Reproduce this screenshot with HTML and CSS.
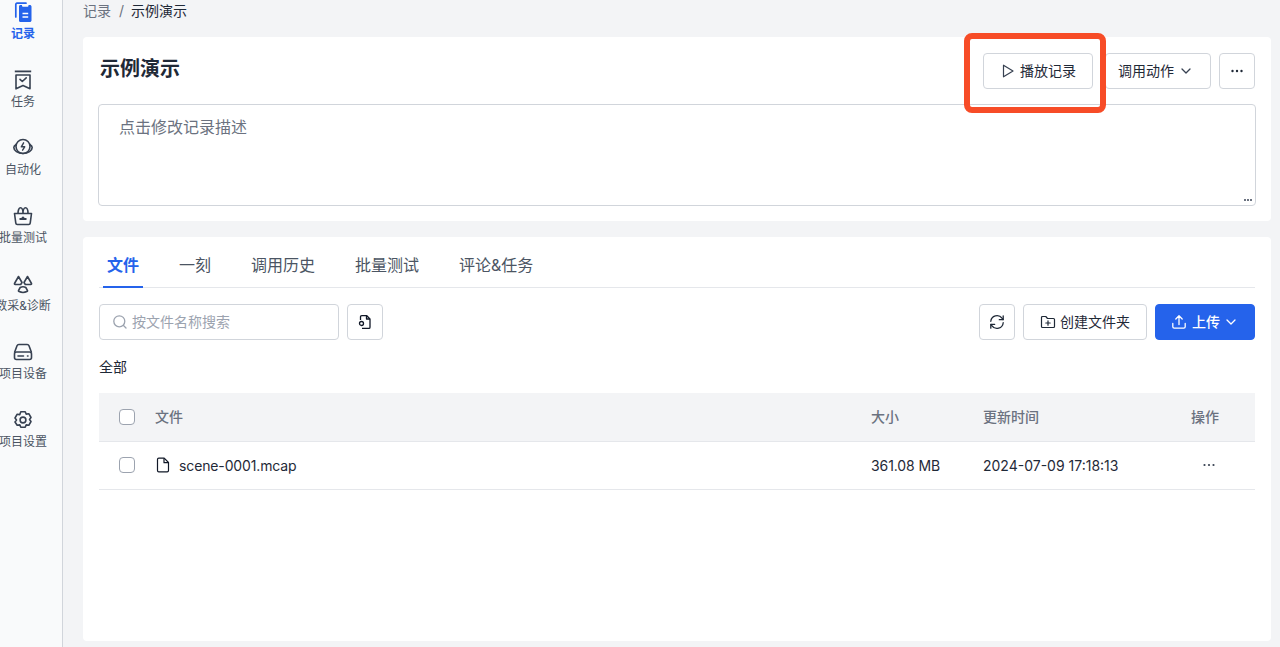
FILE: index.html
```html
<!DOCTYPE html>
<html>
<head>
    <title>示例演示</title>
    <link rel="stylesheet" href="styles.css">
</head>
<body>
    <div class="app">
        <!-- Left navigation -->
        <nav class="sidebar">
            <a class="nav-item active">
                <svg class="nav-icon" viewBox="0 0 20 20">
                    <path d="M2.800 15V2.400c0-.7.500-1.200 1.200-1.200h9" fill="none" stroke="#2563eb" stroke-width="1.700" stroke-linecap="round"/>
                    <path d="M6 4.500C6 3.700 6.600 3 7.400 3H9v.5c0 .8.600 1.300 1.300 1.300h4c.7 0 1.200-.5 1.200-1.300V3h1.300c.9 0 1.700.7 1.700 1.500v14c0 .9-.8 1.500-1.700 1.500H7.400C6.600 20 6 19.400 6 18.500z" fill="#2563eb"/>
                    <path d="M9.500 11.500h5.700M9.500 15h5.700" stroke="#fff" stroke-width="1.500"/>
                </svg>
                <span>记录</span>
            </a>
            <a class="nav-item">
                <svg class="nav-icon" viewBox="0 0 20 20" fill="none" stroke="#374151" stroke-width="1.600">
                    <path d="M1.800 1.400h16.400" stroke-width="1.800"/>
                    <path d="M3 5h14v13.800l-7-3.300-7 3.300z" stroke-linejoin="round"/>
                    <path d="M7 9.300l2.300 2.200 3.900-3.600" stroke-linecap="round" stroke-linejoin="round"/>
                </svg>
                <span>任务</span>
            </a>
            <a class="nav-item">
                <svg class="nav-icon" viewBox="0 0 20 20" fill="none" stroke="#374151" stroke-width="1.600">
                    <circle cx="10" cy="8.500" r="7"/>
                    <path d="M3.200 6.500C1.600 7.400.8 8.500.8 9.500c0 3 4 6 9.200 6s9.200-3 9.200-6c0-1-.8-2.100-2.400-3" stroke-linecap="round"/>
                    <path d="M10.600 4.800L8.300 8.800h3.400L9.600 12.200" stroke-linecap="round" stroke-linejoin="round" stroke-width="1.400"/>
                </svg>
                <span>自动化</span>
            </a>
            <a class="nav-item">
                <svg class="nav-icon" viewBox="0 0 20 20" fill="none" stroke="#374151" stroke-width="1.600">
                    <path d="M1.500 7.500h17l-1.300 9.700c-.1.800-.7 1.300-1.500 1.300H4.300c-.8 0-1.400-.5-1.500-1.300z" stroke-linejoin="round"/>
                    <path d="M5 7.500C5 4 6 1.800 7.500 1.800S10 4 10 7.500c0-3.500 1-5.700 2.500-5.700S15 4 15 7.500"/>
                    <path d="M10 10.300l1.800 1.800h1.700v1.900h-7v-1.900h1.700z" fill="#374151" stroke="none"/>
                </svg>
                <span>批量测试</span>
            </a>
            <a class="nav-item">
                <svg class="nav-icon" viewBox="0 0 20 20" fill="none" stroke="#374151" stroke-width="1.600" stroke-linejoin="round">
                    <path d="M5.500 2.500L1.500 9.500c-.2.500.1 1 .6 1h5.600L9 8.500z"/>
                    <path d="M14.500 2.500l4 7c.2.500-.1 1-.6 1h-5.600L11 8.500z"/>
                    <path d="M7.200 13.500c1.800-1 3.800-1 5.600 0l1.600 2.900c.2.500 0 1-.5 1.200-2.500 1.100-5.300 1.100-7.800 0-.5-.2-.7-.7-.5-1.200z"/>
                </svg>
                <span>数采&amp;诊断</span>
            </a>
            <a class="nav-item">
                <svg class="nav-icon" viewBox="0 0 20 20" fill="none" stroke="#374151" stroke-width="1.600">
                    <path d="M1.500 10.500L4 3.800c.3-.8 1-1.300 1.800-1.300h8.400c.8 0 1.500.5 1.800 1.300l2.500 6.700"/>
                    <rect x="1.500" y="10" width="17" height="7.500" rx="2"/>
                    <path d="M5 14h5.500M14.500 14h.5" stroke-linecap="round"/>
                </svg>
                <span>项目设备</span>
            </a>
            <a class="nav-item">
                <svg class="nav-icon" viewBox="0 0 20 20" fill="none" stroke="#374151" stroke-width="1.600" stroke-linejoin="round">
                    <path d="M7.800 1.700h4.400l1 2.400 2.600-.4 2.200 3.800-1.500 2 1.500 2-2.200 3.800-2.600-.4-1 2.400H7.800l-1-2.400-2.600.4L2 12l1.500-2-1.500-2 2.200-3.800 2.600.4z"/>
                    <circle cx="10" cy="10" r="2.900"/>
                </svg>
                <span>项目设置</span>
            </a>
        </nav>

        <main class="content">
            <div class="breadcrumb">
                <span class="crumb-link">记录</span>
                <span class="crumb-sep">/</span>
                <span>示例演示</span>
            </div>

            <!-- Record header -->
            <section class="card record-card">
                <div class="record-head">
                    <h1 class="record-title">示例演示</h1>
                    <div class="record-actions">
                        <button class="btn play-btn">
                            <svg class="icon" viewBox="0 0 16 16" fill="none" stroke="#374151" stroke-width="1.200" stroke-linejoin="round"><path d="M3.500 2.200v11.600L13 8z"/></svg>
                            <span class="btn-text">播放记录</span>
                        </button>
                        <button class="btn action-btn">
                            <span class="btn-text">调用动作</span>
                            <svg class="chevron" viewBox="0 0 12 12" fill="none" stroke="#374151" stroke-width="1.300" stroke-linecap="round" stroke-linejoin="round"><path d="M2 4l4 4 4-4"/></svg>
                        </button>
                        <button class="btn icon-btn">
                            <svg class="icon" viewBox="0 0 16 16" fill="#1f2937"><circle cx="3.500" cy="8" r="1.200"/><circle cx="8" cy="8" r="1.200"/><circle cx="12.500" cy="8" r="1.200"/></svg>
                        </button>
                    </div>
                </div>
                <div class="record-desc">
                    点击修改记录描述
                    <span class="desc-more"><i></i><i></i><i></i></span>
                </div>
                <!-- Highlight frame drawn on the screenshot -->
                <div class="highlight"></div>
            </section>

            <!-- Files -->
            <section class="card files-card">
                <div class="tabs">
                    <a class="tab active">文件</a>
                    <a class="tab">一刻</a>
                    <a class="tab">调用历史</a>
                    <a class="tab">批量测试</a>
                    <a class="tab">评论&amp;任务</a>
                </div>

                <div class="toolbar">
                    <div class="search-box">
                        <svg class="icon" viewBox="0 0 16 16" fill="none" stroke="#9ca3af" stroke-width="1.300" stroke-linecap="round"><circle cx="7.300" cy="7.300" r="5.500"/><path d="M11.500 11.500L14 14"/></svg>
                        <span class="btn-text">按文件名称搜索</span>
                    </div>
                    <button class="btn icon-btn">
                        <svg class="icon" viewBox="0 0 16 16" fill="none" stroke="#111827" stroke-width="1.300" stroke-linejoin="round"><path d="M3.500 6V3c0-.8.500-1.300 1.300-1.300h5L13 5v8.200c0 .7-.5 1.200-1.200 1.200H5"/><path d="M9.500 1.700V5H13"/><circle cx="4.500" cy="9.500" r="2"/></svg>
                    </button>
                    <div class="toolbar-right">
                        <button class="btn icon-btn">
                            <svg class="icon" viewBox="0 0 16 16" fill="none" stroke="#1f2937" stroke-width="1.300" stroke-linecap="round" stroke-linejoin="round"><path d="M1.800 7.300A6.200 6.200 0 0 1 13 4.200l1 1.300M14.200 8.700A6.200 6.200 0 0 1 3 11.800l-1-1.300"/><path d="M14.200 1.800v3.900h-3.900M1.800 14.200v-3.900h3.900"/></svg>
                        </button>
                        <button class="btn create-btn">
                            <svg class="icon" viewBox="0 0 16 16" fill="none" stroke="#1f2937" stroke-width="1.200" stroke-linejoin="round" stroke-linecap="round"><path d="M1.500 3.500c0-.6.400-1 1-1h3.300L7.500 4.500h6c.6 0 1 .4 1 1v7c0 .6-.4 1-1 1h-11c-.6 0-1-.4-1-1z"/><path d="M8 6.800v4.400M5.800 9h4.400"/></svg>
                            <span class="btn-text">创建文件夹</span>
                        </button>
                        <button class="btn upload-btn">
                            <svg class="icon" viewBox="0 0 16 16" fill="none" stroke="#fff" stroke-width="1.300" stroke-linecap="round" stroke-linejoin="round"><path d="M1.800 9.500v3.300c0 .8.600 1.400 1.400 1.400h9.600c.8 0 1.400-.6 1.400-1.400V9.500"/><path d="M8 10.500V2M4.800 5L8 1.800 11.200 5"/></svg>
                            <span class="btn-text">上传</span>
                            <svg class="chevron" viewBox="0 0 12 12" fill="none" stroke="#fff" stroke-width="1.300" stroke-linecap="round" stroke-linejoin="round"><path d="M2 4l4 4 4-4"/></svg>
                        </button>
                    </div>
                </div>

                <div class="path-label">全部</div>

                <div class="file-table">
                    <div class="file-row table-head">
                        <span class="checkbox"></span>
                        <span class="head-cell">文件</span>
                        <span class="head-cell">大小</span>
                        <span class="head-cell">更新时间</span>
                        <span class="head-cell">操作</span>
                    </div>
                    <div class="file-row body-row">
                        <span class="checkbox"></span>
                        <span class="file-name">
                            <svg class="icon" viewBox="0 0 16 16" fill="none" stroke="#111827" stroke-width="1.200" stroke-linejoin="round"><path d="M2.500 2.500c0-.8.500-1.300 1.300-1.300h5.400L13.500 5.500v8c0 .8-.5 1.300-1.300 1.300H3.800c-.8 0-1.300-.5-1.300-1.300z"/><path d="M9 1.200v4.500h4.500"/></svg>
                            scene-0001.mcap
                        </span>
                        <span class="file-size">361.08 MB</span>
                        <span>2024-07-09 17:18:13</span>
                        <span class="row-more">
                            <svg class="icon" viewBox="0 0 16 16" fill="#374151"><circle cx="3.500" cy="8" r="1.100"/><circle cx="8" cy="8" r="1.100"/><circle cx="12.500" cy="8" r="1.100"/></svg>
                        </span>
                    </div>
                </div>
            </section>
        </main>
    </div>
</body>
</html>
```

FILE: styles.css
```css
* {
    box-sizing: border-box;
}

html, body {
    margin: 0;
    height: 100%;
    overflow: hidden;
}

body {
    font-family: Inter, "Noto Sans CJK SC", sans-serif;
    font-size: 14px;
    color: #1f2937;
    background-color: #f3f4f6;
}

.app {
    display: flex;
    height: 647px;
}

/* Left navigation */
.sidebar {
    width: 63px;
    flex-shrink: 0;
    padding-top: 2px;
    overflow: hidden;
    background-color: #f9fafb;
    border-right: 1px solid #d1d5db;
}

.nav-item {
    width: 46px;
    height: 68px;
    display: flex;
    flex-direction: column;
    align-items: center;
    font-size: 12px;
    line-height: 20px;
    white-space: nowrap;
    color: #4b5563;
}

.nav-icon {
    width: 20px;
    height: 20px;
    margin-bottom: 2px;
    flex-shrink: 0;
}

.nav-item.active {
    color: #2563eb;
    font-weight: 600;
}

/* Main column */
.content {
    flex: 1;
    min-width: 0;
    padding: 0 9px 6px 20px;
    display: flex;
    flex-direction: column;
}

.breadcrumb {
    height: 37px;
    padding-top: 1px;
    line-height: 20px;
    font-size: 14px;
    display: flex;
    gap: 8px;
    color: #1f2937;
}

.crumb-link,
.crumb-sep {
    color: #6b7280;
}

.crumb-sep {
    margin-right: -1px;
}

.card {
    background-color: #fff;
    border-radius: 4px;
    position: relative;
}

.record-card {
    height: 184px;
    margin-bottom: 16px;
    padding: 16px 15px 15px;
}

.record-head {
    display: flex;
    justify-content: space-between;
    height: 36px;
    padding-left: 2px;
    margin-bottom: 15px;
}

.record-title {
    margin: 0;
    font-size: 20px;
    line-height: 32px;
    font-weight: 600;
    color: #1f2937;
}

.record-actions {
    display: flex;
    gap: 8px;
    padding-right: 1px;
}

/* Buttons */
.btn {
    height: 36px;
    display: inline-flex;
    align-items: center;
    justify-content: center;
    gap: 4px;
    padding: 0;
    font-family: inherit;
    font-size: 14px;
    color: #1f2937;
    background-color: #fff;
    border: 1px solid #d1d5db;
    border-radius: 4px;
    cursor: pointer;
}

.btn-text {
    margin-bottom: 2px;
}

.icon {
    width: 16px;
    height: 16px;
    flex-shrink: 0;
}

.chevron {
    width: 12px;
    height: 12px;
    flex-shrink: 0;
}

.icon-btn {
    width: 36px;
}

.play-btn {
    width: 110px;
}

.action-btn {
    width: 106px;
    margin-left: 4px;
    padding-left: 12px;
    justify-content: flex-start;
    gap: 6px;
}

.create-btn {
    width: 124px;
}

.upload-btn {
    width: 100px;
    padding-left: 15px;
    justify-content: flex-start;
    gap: 5px;
    color: #fff;
    font-weight: 500;
    background-color: #2563eb;
    border-color: #2563eb;
}

/* Description box */
.record-desc {
    position: relative;
    height: 102px;
    padding: 11px 20px;
    font-size: 16px;
    line-height: 22px;
    color: #6b7280;
    border: 1px solid #d1d5db;
    border-radius: 4px;
}

.desc-more {
    position: absolute;
    right: 3px;
    bottom: 4px;
    display: flex;
    gap: 1px;
}

.desc-more i {
    width: 2px;
    height: 2px;
    background-color: #6b7280;
}

.highlight {
    position: absolute;
    top: -4px;
    right: 165px;
    width: 142px;
    height: 80px;
    border: 6px solid #f74c27;
    border-radius: 8px;
    pointer-events: none;
}

/* Files card */
.files-card {
    flex: 1;
    padding: 0 16px;
}

.tabs {
    height: 51px;
    padding-left: 4px;
    display: flex;
    gap: 32px;
    border-bottom: 1px solid #e5e7eb;
}

.tab {
    height: 51px;
    padding: 16px 4px 0;
    font-size: 16px;
    line-height: 24px;
    color: #4b5563;
    white-space: nowrap;
}

.tab.active {
    color: #2563eb;
    font-weight: 600;
    border-bottom: 2px solid #2563eb;
}

.toolbar {
    display: flex;
    gap: 8px;
    margin-top: 16px;
}

.toolbar-right {
    margin-left: auto;
    display: flex;
    gap: 8px;
}

.search-box {
    width: 240px;
    height: 36px;
    padding: 0 12px;
    display: flex;
    align-items: center;
    gap: 4px;
    color: #9ca3af;
    border: 1px solid #d1d5db;
    border-radius: 4px;
}

.path-label {
    height: 53px;
    padding-top: 17px;
    line-height: 20px;
    color: #1f2937;
}

/* File table */
.file-row {
    height: 49px;
    display: grid;
    grid-template-columns: 56px 716px 112px 208px 64px;
    align-items: center;
    border-bottom: 1px solid #e5e7eb;
    color: #1f2937;
}

.table-head {
    color: #6b7280;
    font-weight: 500;
    background-color: #f3f4f6;
}

.head-cell {
    margin-bottom: 2px;
}

.body-row {
    height: 48px;
    padding-bottom: 1px;
}

.checkbox {
    width: 16px;
    height: 16px;
    margin-left: 20px;
    background-color: #fff;
    border: 1px solid #9ca3af;
    border-radius: 4px;
}

.file-name {
    display: flex;
    align-items: center;
    gap: 8px;
    letter-spacing: -0.13px;
}

.file-size {
    letter-spacing: -0.1px;
}

.row-more {
    display: flex;
    padding-left: 10px;
}
```
